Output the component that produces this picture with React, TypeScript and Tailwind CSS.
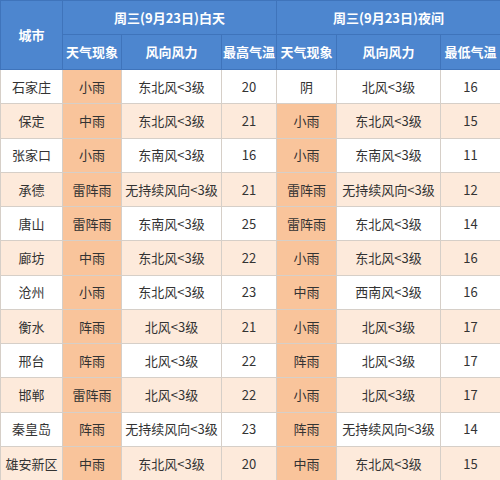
const rows = [
  { city: "石家庄", dw: "小雨", dwind: "东北风<3级", hi: 20, nw: "阴", nwind: "北风<3级", lo: 16 },
  { city: "保定", dw: "中雨", dwind: "东北风<3级", hi: 21, nw: "小雨", nwind: "东北风<3级", lo: 15 },
  { city: "张家口", dw: "小雨", dwind: "东南风<3级", hi: 16, nw: "小雨", nwind: "东南风<3级", lo: 11 },
  { city: "承德", dw: "雷阵雨", dwind: "无持续风向<3级", hi: 21, nw: "雷阵雨", nwind: "无持续风向<3级", lo: 12 },
  { city: "唐山", dw: "雷阵雨", dwind: "东南风<3级", hi: 25, nw: "雷阵雨", nwind: "东北风<3级", lo: 14 },
  { city: "廊坊", dw: "中雨", dwind: "东北风<3级", hi: 22, nw: "小雨", nwind: "东北风<3级", lo: 16 },
  { city: "沧州", dw: "小雨", dwind: "东北风<3级", hi: 23, nw: "中雨", nwind: "西南风<3级", lo: 16 },
  { city: "衡水", dw: "阵雨", dwind: "北风<3级", hi: 21, nw: "小雨", nwind: "北风<3级", lo: 17 },
  { city: "邢台", dw: "阵雨", dwind: "北风<3级", hi: 22, nw: "阵雨", nwind: "北风<3级", lo: 17 },
  { city: "邯郸", dw: "雷阵雨", dwind: "北风<3级", hi: 22, nw: "小雨", nwind: "北风<3级", lo: 17 },
  { city: "秦皇岛", dw: "阵雨", dwind: "无持续风向<3级", hi: 23, nw: "阵雨", nwind: "无持续风向<3级", lo: 14 },
  { city: "雄安新区", dw: "中雨", dwind: "东北风<3级", hi: 20, nw: "中雨", nwind: "东北风<3级", lo: 15 },
];

const head = "border border-[#3f74bb] bg-[#4d86cf] text-white font-bold text-[13px]";
const cell = "border border-[#d6cfc8] text-center text-[13px] text-[#333333] p-0";

export default function App() {
  return (
    <div className="w-[500px] h-[480px] overflow-hidden bg-white" style={{ fontFamily: '"Noto Sans CJK SC", "Noto Sans", sans-serif' }}>
      <table className="w-[500px] table-fixed border-collapse">
        <colgroup>
          <col className="w-[62px]" />
          <col className="w-[59px]" />
          <col className="w-[100px]" />
          <col className="w-[55px]" />
          <col className="w-[60px]" />
          <col className="w-[104px]" />
          <col className="w-[60px]" />
        </colgroup>
        <thead>
          <tr className="h-[34px]">
            <th rowSpan={2} className={head}>城市</th>
            <th colSpan={3} className={head}>周三(9月23日)白天</th>
            <th colSpan={3} className={head}>周三(9月23日)夜间</th>
          </tr>
          <tr className="h-[35px]">
            <th className={head}>天气现象</th>
            <th className={head}>风向风力</th>
            <th className={head}>最高气温</th>
            <th className={head}>天气现象</th>
            <th className={head}>风向风力</th>
            <th className={head}>最低气温</th>
          </tr>
        </thead>
        <tbody>
          {rows.map((r, i) => {
            const bg = i % 2 === 1 ? "bg-[#fdeadb]" : "bg-white";
            return (
              <tr key={r.city} className={`h-[34.25px] ${bg}`}>
                <td className={cell}>{r.city}</td>
                <td className={`${cell} bg-[#f9c49b]`}>{r.dw}</td>
                <td className={cell}>{r.dwind}</td>
                <td className={cell}>{r.hi}</td>
                <td className={`${cell} ${r.nw === "阴" ? "" : "bg-[#f9c49b]"}`}>{r.nw}</td>
                <td className={cell}>{r.nwind}</td>
                <td className={cell}>{r.lo}</td>
              </tr>
            );
          })}
        </tbody>
      </table>
    </div>
  );
}
